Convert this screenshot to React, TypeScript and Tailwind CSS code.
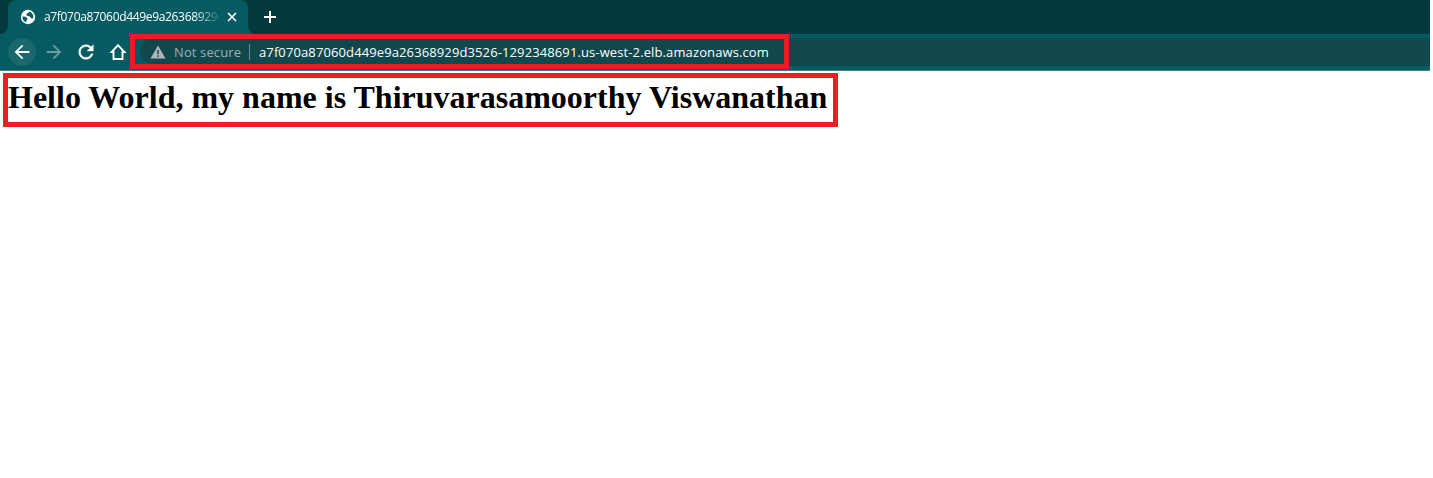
import React from "react";

function TabShoulder({ flip = false }: { flip?: boolean }) {
  return (
    <svg width="8" height="8" viewBox="0 0 8 8" className={flip ? "self-end -scale-x-100" : "self-end"}>
      <path d="M8 0v8H0a8 8 0 0 0 8-8z" fill="#055b61" />
    </svg>
  );
}

function Tab() {
  return (
    <div className="flex h-[34px]">
      <TabShoulder />
      <div className="flex h-[34px] w-[240px] items-center rounded-t-lg bg-[#055b61] pl-[12px]">
        <svg width="16" height="16" viewBox="0 0 16 16" className="shrink-0">
          <circle cx="8" cy="8" r="7.2" fill="#fff" />
          <path d="M9.3 2.5C8.8 4.2 7.4 3.8 6.6 5c-.7 1.1.1 1.9 1.4 2 1.6.1 2.3.6 2.6 1.7.3.8 1.3 1 2.6.6A5.6 5.6 0 0 0 9.3 2.5z" fill="#055b61" />
          <path d="M2.6 7.6c1.8.1 3.4.4 4.4 1.2 1.1.9.4 2-.3 2.4-.6.4-.4 1.2-.3 2.2A5.6 5.6 0 0 1 2.6 7.6z" fill="#055b61" />
        </svg>
        <div className="ml-[8px] w-[175px] overflow-hidden whitespace-nowrap text-[12px] leading-4 tracking-[-0.33px] text-white [mask-image:linear-gradient(to_right,#000_150px,transparent_178px)]">
          a7f070a87060d449e9a26368929d
        </div>
        <svg width="10" height="10" viewBox="0 0 10 10" className="ml-[8px] shrink-0">
          <path d="M1 1l8 8M9 1L1 9" stroke="#fff" strokeWidth="1.7" />
        </svg>
      </div>
      <TabShoulder flip />
    </div>
  );
}

function Toolbar() {
  return (
    <div className="flex h-[37px] border-b border-[#3f8287] bg-[#055b61]">
      <div className="flex h-9 w-[130px] shrink-0 items-center pl-2">
        <div className="flex size-7 items-center justify-center rounded-full bg-[#1a686e]">
          <svg width="22" height="22" viewBox="0 0 24 24" fill="#fff">
            <path d="M20 11H7.83l5.59-5.59L12 4l-8 8 8 8 1.41-1.41L7.83 13H20v-2z" />
          </svg>
        </div>
        <svg className="ml-[7px]" width="22" height="22" viewBox="0 0 24 24" fill="#6a9ea2">
          <path d="M12 4l-1.41 1.41L16.17 11H4v2h12.17l-5.58 5.59L12 20l8-8z" />
        </svg>
        <svg className="ml-[10px]" width="22" height="22" viewBox="0 0 24 24" fill="#fff" stroke="#fff" strokeWidth="0.4">
          <path d="M17.65 6.35A7.958 7.958 0 0 0 12 4c-4.42 0-7.99 3.58-7.99 8s3.57 8 7.99 8c3.73 0 6.84-2.55 7.73-6h-2.08A5.99 5.99 0 0 1 12 18c-3.31 0-6-2.69-6-6s2.69-6 6-6c1.66 0 3.14.69 4.22 1.78L13 11h7V4l-2.35 2.35z" />
        </svg>
        <svg className="ml-[12px]" width="18" height="18" viewBox="0 0 18 18" fill="none">
          <path d="M9 2.1L2.6 9H4.5v7h9V9h1.9z" stroke="#fff" strokeWidth="1.9" />
        </svg>
      </div>
      <div className="h-[35px] w-[659px] border-5 border-[#ed1c24] pl-[5px]">
        <div className="flex h-[25px] items-center rounded-l-[13px] bg-[#10484e] pl-[10px] text-[13px] leading-5">
          <svg width="16" height="14" viewBox="0 0 16 14">
            <path d="M8 0.5L15.5 13.5H0.5z" fill="#aeb6b9" />
            <path d="M7.2 5h1.6v4H7.2zM7.2 10.2h1.6v1.6H7.2z" fill="#10484e" />
          </svg>
          <span className="ml-[8px] w-[67px] whitespace-nowrap tracking-[0.12px] text-[#9fb0b3]">Not secure</span>
          <div className="ml-[8px] h-4 w-px bg-[#6b8d91]" />
          <span className="ml-[9px] whitespace-nowrap tracking-[0.113px] text-white">
            a7f070a87060d449e9a26368929d3526-1292348691.us-west-2.elb.amazonaws.com
          </span>
        </div>
      </div>
      <div className="mt-1 h-7 flex-1 bg-[#10484e]" />
    </div>
  );
}

export default function App() {
  return (
    <div className="h-[478px] w-[1433px] overflow-hidden bg-white font-['Open_Sans','Noto_Sans',sans-serif]">
      <header className="w-[1430px]">
        <div className="flex h-[34px] bg-[#03393d]">
          <Tab />
          <svg width="12" height="12" viewBox="0 0 12 12" className="ml-2 mt-[11px]">
            <path d="M6 0v12M0 6h12" stroke="#fff" strokeWidth="2" />
          </svg>
        </div>
        <Toolbar />
      </header>
      <main className="pl-[3px] pt-[2px]">
        <div className="h-[54px] w-[835px] border-5 border-[#ed1c24]">
          <h1 className="mt-px whitespace-nowrap font-['Liberation_Serif',serif] text-[32px] font-bold leading-9 text-black">
            Hello World, my name is Thiruvarasamoorthy Viswanathan
          </h1>
        </div>
      </main>
    </div>
  );
}
